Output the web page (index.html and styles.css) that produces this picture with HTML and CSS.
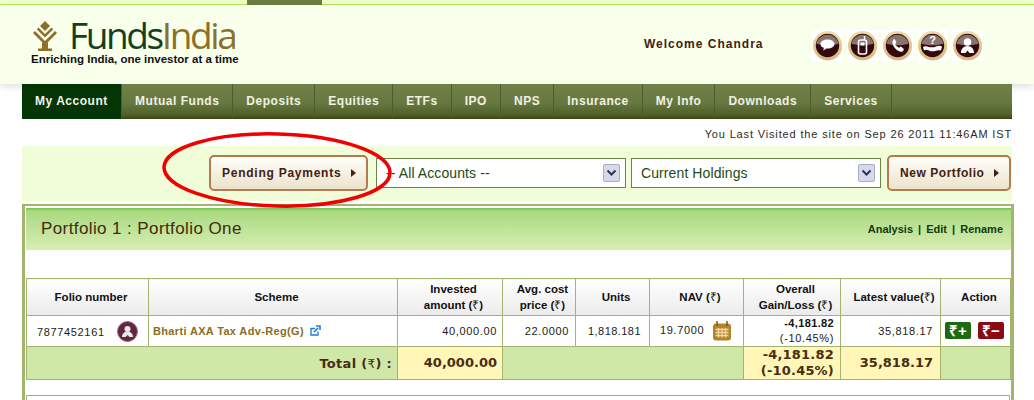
FILE: index.html
```html
<!DOCTYPE html>
<html lang="en">
<head>
<meta charset="utf-8">
<title>FundsIndia - My Account</title>
<link rel="stylesheet" href="styles.css">
</head>
<body>
<svg class="defs" width="0" height="0" aria-hidden="true">
  <defs>
    <linearGradient id="ring" x1="0" y1="0" x2="0" y2="1"><stop offset="0" stop-color="#f0dca8"/><stop offset="1" stop-color="#d9b878"/></linearGradient>
    <symbol id="disc" viewBox="0 0 31 31">
      <rect width="31" height="31" fill="#fff"/>
      <circle cx="16" cy="16.5" r="14" fill="#cfc8b8"/>
      <circle cx="15.5" cy="15.5" r="14.5" fill="url(#ring)"/>
      <circle cx="15.5" cy="15.5" r="11.7" fill="#34090f"/>
      <path d="M4.2 13.5a11.7 11.7 0 0 1 22.6 0c-3 1.2-7 1.8-11.3 1.8s-8.300-.6-11.300-1.800z" fill="#8a7470"/>
    </symbol>
  </defs>
</svg>
<div class="topstrip"><span class="toptab"></span></div>
<header class="header">
  <div class="brand">
    <div class="logo">
      <svg class="logomark" width="26" height="30" viewBox="0 0 26 30">
        <path d="M13 0l5 5-5 5-5-5z" fill="#8d6f2a"/>
        <path d="M6.500 6.500L13 13l6.500-6.500 1.700 1.700L13 16.400 4.800 8.200z" fill="#8d6f2a"/>
        <path d="M3 10l10 10 10-10 2 2-12 12L1 12z" fill="#8d6f2a"/>
        <path d="M10 21.500h6V30h-6zM6 27.500h14V30H6z" fill="#8d6f2a"/>
      </svg>
      <span class="wordmark"><span class="word-funds">Funds</span><span class="word-india">India</span></span>
    </div>
    <div class="tagline">Enriching India, one investor at a time</div>
  </div>
  <div class="welcome">Welcome Chandra</div>
  <div class="quick-icons">
    <svg class="qicon" viewBox="0 0 31 31"><use href="#disc"/><path d="M8.500 14c0-2.500 3-4.500 7-4.500s7 2 7 4.500-3 4.500-7 4.500l-1.200 0-3 2.300.5-3C9.800 17.300 8.500 15.800 8.500 14z" fill="#fff"/></svg>
    <svg class="qicon" viewBox="0 0 31 31"><use href="#disc"/><rect x="11.500" y="10" width="8" height="14" rx="2" fill="none" stroke="#fff" stroke-width="1.600"/><path d="M17.500 10V6" stroke="#fff" stroke-width="1.400"/><rect x="13.500" y="12.500" width="4" height="3" fill="#fff"/></svg>
    <svg class="qicon" viewBox="0 0 31 31"><use href="#disc"/><path d="M12 8.500l2.500 3.500-1.300 2c.8 1.800 2 3 3.800 3.800l2-1.200 3 2.700-1.500 2.500c-5 .8-10.500-5.500-10-10.500z" fill="#fff"/></svg>
    <svg class="qicon" viewBox="0 0 31 31"><use href="#disc"/><text x="15.500" y="14" class="qmark">?</text><path d="M6 17c2-1.500 4-.5 6 0s5 .5 7-.5 4-1 6 0l-1 4c-2-.5-4 0-6 .5s-4 .5-6-.5-4-1-5 0z" fill="#fff"/></svg>
    <svg class="qicon" viewBox="0 0 31 31"><use href="#disc"/><circle cx="15.500" cy="12" r="3.800" fill="#fff"/><path d="M9 23c0-4 2.500-7 6.500-7s6.500 3 6.500 7h-4.500l-2-2.500-2 2.500z" fill="#fff"/></svg>
  </div>
</header>
<div class="page">
  <nav class="nav">
    <a class="nav-item active">My Account</a>
    <a class="nav-item">Mutual Funds</a>
    <a class="nav-item">Deposits</a>
    <a class="nav-item">Equities</a>
    <a class="nav-item">ETFs</a>
    <a class="nav-item">IPO</a>
    <a class="nav-item">NPS</a>
    <a class="nav-item">Insurance</a>
    <a class="nav-item">My Info</a>
    <a class="nav-item">Downloads</a>
    <a class="nav-item">Services</a>
  </nav>
  <div class="visited">You Last Visited the site on Sep 26 2011 11:46AM IST</div>
  <div class="filters">
    <a class="btn btn-pending">Pending Payments<span class="tri"></span></a>
    <div class="select"><span>-- All Accounts --</span><svg class="sel-arrow" width="17" height="18" viewBox="0 0 17 18"><rect x=".5" y=".5" width="16" height="17" rx="1.500" fill="#d5d9ea" stroke="#a8adc4"/><path d="M4.500 6.500l4 4 4-4" fill="none" stroke="#30364d" stroke-width="2"/></svg></div>
    <div class="select"><span>Current Holdings</span><svg class="sel-arrow" width="17" height="18" viewBox="0 0 17 18"><rect x=".5" y=".5" width="16" height="17" rx="1.500" fill="#d5d9ea" stroke="#a8adc4"/><path d="M4.500 6.500l4 4 4-4" fill="none" stroke="#30364d" stroke-width="2"/></svg></div>
    <a class="btn btn-new">New Portfolio<span class="tri"></span></a>
    <svg class="callout" width="232" height="80" viewBox="0 0 232 80"><ellipse cx="115" cy="39" rx="113" ry="36" transform="rotate(1.500 115 39)" fill="none" stroke="#f00000" stroke-width="3.500"/></svg>
  </div>
  <section class="portfolio">
    <div class="portfolio-head">
      <h2 class="portfolio-title">Portfolio 1 : Portfolio One</h2>
      <div class="portfolio-links"><a>Analysis</a> | <a>Edit</a> | <a>Rename</a></div>
    </div>
    <table class="holdings">
      <colgroup>
        <col class="c1"><col class="c2"><col class="c3"><col class="c4"><col class="c5"><col class="c6"><col class="c7"><col class="c8"><col class="c9">
      </colgroup>
      <thead>
        <tr>
          <th>Folio number</th>
          <th>Scheme</th>
          <th>Invested<br>amount (<span class="rs">₹</span>)</th>
          <th>Avg. cost<br>price (<span class="rs">₹</span>)</th>
          <th>Units</th>
          <th>NAV (<span class="rs">₹</span>)</th>
          <th>Overall<br>Gain/Loss (<span class="rs">₹</span>)</th>
          <th>Latest value(<span class="rs">₹</span>)</th>
          <th>Action</th>
        </tr>
      </thead>
      <tbody>
        <tr class="row">
          <td class="folio"><span>7877452161</span><svg class="user-badge" width="21" height="21" viewBox="0 0 21 21"><circle cx="10.500" cy="10.500" r="10" fill="#5c2a3e" stroke="#b5638a" stroke-width="1"/><circle cx="10.500" cy="8" r="3" fill="#f1e6ea"/><path d="M5 16c0-3 2-5.500 5.500-5.500S16 13 16 16h-3.500l-2-2-2 2z" fill="#f1e6ea"/></svg></td>
          <td class="scheme"><a>Bharti AXA Tax Adv-Reg(G)</a><svg class="ext" width="11" height="11" viewBox="0 0 11 11"><path d="M1 3.500h4M1 3v7h7V6.500" fill="none" stroke="#1a78d8" stroke-width="1.300"/><path d="M4 7l4-4M6 1h4v4" fill="none" stroke="#1a78d8" stroke-width="1.600"/></svg></td>
          <td class="num">40,000.00</td>
          <td class="num num-avg">22.0000</td>
          <td class="num num-units">1,818.181</td>
          <td class="nav-cell"><span>19.7000</span><svg width="18" height="20" viewBox="0 0 18 20"><rect x="0" y="2.500" width="18" height="17" rx="3" fill="#b5832a"/><path d="M4 0v5M14 0v5" stroke="#7a5a20" stroke-width="1.500"/><path d="M2.500 8.500h13M2.500 11.500h13M2.500 14.500h13M5.500 7v9.500M9 7v9.500M12.500 7v9.500" stroke="#f0d8a0" stroke-width="1.400"/></svg></td>
          <td class="num gain"><b>-4,181.82</b><br>(-10.45%)</td>
          <td class="num num-latest">35,818.17</td>
          <td class="action"><span class="act buy">₹+</span><span class="act sell">₹−</span></td>
        </tr>
        <tr class="total">
          <td colspan="2" class="total-label">Total (<span class="rs">₹</span>) :</td>
          <td class="hl">40,000.00</td>
          <td colspan="3"></td>
          <td class="hl hl-two">-4,181.82<br>(-10.45%)</td>
          <td class="hl hl-latest">35,818.17</td>
          <td></td>
        </tr>
      </tbody>
    </table>
    <div class="next-box"></div>
  </section>
</div>
</body>
</html>
```
FILE: styles.css
```css
* { box-sizing: border-box; }
html, body { margin: 0; padding: 0; }
body { width: 1034px; height: 400px; overflow: hidden; background: #fff; font-family: "Liberation Sans", Arial, sans-serif; }
.defs { position: absolute; }

.topstrip { height: 5px; background: #eeffc8; border-bottom: 1px solid #b4e35e; padding-left: 247px; }
.toptab { display: block; width: 75px; height: 5px; background: #6b7d41; }

.header { height: 79px; background: #f8ffea; display: flex; box-shadow: 0 3px 7px rgba(0,0,0,.12); }
.brand { width: 644px; padding: 15px 0 0 31px; }
.logo { display: flex; align-items: flex-start; height: 32px; }
.logomark { margin: 1px 0 0 1px; }
.wordmark { font-family: "Open Sans", sans-serif; font-weight: 400; font-size: 37px; line-height: 30px; letter-spacing: -2.400px; margin: 0 0 0 11px; }
.word-funds { color: #123f1c; }
.word-india { color: #8d6f2a; }
.tagline { font-size: 11.500px; font-weight: bold; line-height: 14px; color: #111; }
.welcome { width: 168px; padding-top: 32px; font-size: 12px; font-weight: bold; letter-spacing: 1px; color: #43200f; line-height: 14px; }
.quick-icons { display: flex; gap: 4px; padding-top: 25px; }
.qicon { width: 31px; height: 31px; }
.qmark { font: bold 11px "Liberation Sans", sans-serif; fill: #fff; text-anchor: middle; }

.page { width: 992px; margin-left: 22px; }
.nav { position: relative; width: 990px; height: 35px; display: flex; background: linear-gradient(#6f8246, #66783f 55%, #4f6028 88%, #3a4415); }
.nav-item { display: block; padding: 0 13px; white-space: nowrap; line-height: 35px; font-size: 12px; font-weight: bold; letter-spacing: .53px; color: #f1f1e4; border-right: 1px solid #4d5c2a; }
.nav-item.active { width: 100px; background: #033505; color: #f2f2e8; }

.visited { width: 990px; height: 27px; padding-top: 9px; text-align: right; font-size: 11px; line-height: 13px; letter-spacing: .85px; color: #2b2b22; }

.filters { position: relative; width: 990px; height: 55px; background: #f1fdd8; display: flex; align-items: flex-start; padding-left: 187px; }
.btn { display: flex; align-items: center; height: 36px; margin-top: 9px; background: linear-gradient(#fffef9, #eae3cc); border: 2px solid #b57a4d; border-radius: 5px; font-size: 12px; font-weight: bold; color: #43200f; }
.btn-pending { width: 159px; padding-left: 11px; letter-spacing: .75px; }
.btn-new { width: 124px; padding-left: 11px; margin-left: 6px; letter-spacing: .55px; }
.tri { width: 0; height: 0; margin-left: 10px; border-left: 5px solid #43200f; border-top: 4px solid transparent; border-bottom: 4px solid transparent; }
.select { display: flex; align-items: center; justify-content: space-between; width: 250px; height: 30px; margin: 12px 0 0 8px; padding: 0 5px 0 9px; background: #fff; border: 1px solid #6e8344; font-size: 14px; letter-spacing: .1px; color: #1d4a12; }
.select + .select { margin-left: 5px; }
.callout { position: absolute; left: 140px; top: -15px; pointer-events: none; }

.portfolio { width: 992px; height: 196px; margin-top: 3px; border: solid #a2b46e; border-width: 2px 3px 0 3px; padding: 2px 1px 0 1px; }
.portfolio-head { display: flex; justify-content: space-between; align-items: center; height: 42px; background: linear-gradient(#76c04e 0, #a9da80 3px, #d8eeb2); padding: 0 6px 0 15px; margin-right: -1px; }
.portfolio-title { margin: 0; font-size: 17px; font-weight: normal; letter-spacing: .4px; color: #43290f; }
.portfolio-links { font-size: 11px; font-weight: bold; color: #143a0f; }
.portfolio-links a { margin: 0 2px; }

.holdings { table-layout: fixed; width: 984px; margin-top: 28px; border-collapse: collapse; font-size: 11px; }
.c1 { width: 122px; } .c2 { width: 249px; } .c3 { width: 105px; } .c4 { width: 73px; } .c5 { width: 74px; } .c6 { width: 94px; } .c7 { width: 97px; } .c8 { width: 100px; } .c9 { width: 70px; }
.holdings th, .holdings td { border: 1px solid #a2b46e; padding: 0; }
.holdings th { height: 37px; padding-left: 7px; background: linear-gradient(#fff, #ebebeb); font-size: 11.500px; line-height: 16px; font-weight: bold; color: #111; text-align: center; white-space: nowrap; }
.rs { font-size: 12px; font-weight: normal; }
.row td { height: 31px; background: #fff; color: #1a1a1a; letter-spacing: .65px; }
.holdings .num { text-align: right; padding-right: 5px; white-space: nowrap; }
.holdings .num-avg { padding-right: 6px; }
.holdings .num-units { padding-right: 8px; letter-spacing: .45px; }
.holdings .num-latest { padding-right: 7px; }
.holdings .folio { padding-left: 10px; }
.folio span { vertical-align: middle; }
.user-badge { vertical-align: middle; margin-left: 12px; }
.holdings .scheme { padding-left: 4px; white-space: nowrap; }
.scheme a { font-size: 11px; font-weight: bold; color: #8a6d1f; letter-spacing: .35px; }
.ext { margin-left: 6px; vertical-align: -1px; }
.holdings .nav-cell { padding-left: 10px; white-space: nowrap; }
.nav-cell svg { vertical-align: middle; margin-left: 9px; }
.holdings .gain { line-height: 15px; padding-right: 6px; }
.gain b { color: #111; letter-spacing: .35px; }
.holdings .action { padding-left: 4px; white-space: nowrap; }
.act { display: inline-block; width: 26px; height: 17px; border-radius: 2px; color: #fff; text-align: center; font-size: 15px; font-weight: bold; line-height: 17px; letter-spacing: 0; vertical-align: 3px; }
.buy { background: #1d6a12; }
.sell { background: #8a0b12; margin-left: 7px; }
.holdings .total td { height: 33px; background: #cfe8a8; font-family: "DejaVu Sans", sans-serif; font-size: 13px; font-weight: bold; letter-spacing: 0; color: #4a2d10; text-align: right; padding-right: 5px; }
.holdings .total .hl { background: #fff6b8; line-height: 16px; }
.holdings .total .hl-two { letter-spacing: .2px; padding-right: 6px; }
.holdings .total .hl-latest { padding-right: 7px; }
.holdings .total .total-label { font-weight: 600; letter-spacing: .3px; }
.next-box { width: 984px; height: 5px; margin-top: 15px; border: 1px solid #a2b46e; border-bottom: 0; }
```
